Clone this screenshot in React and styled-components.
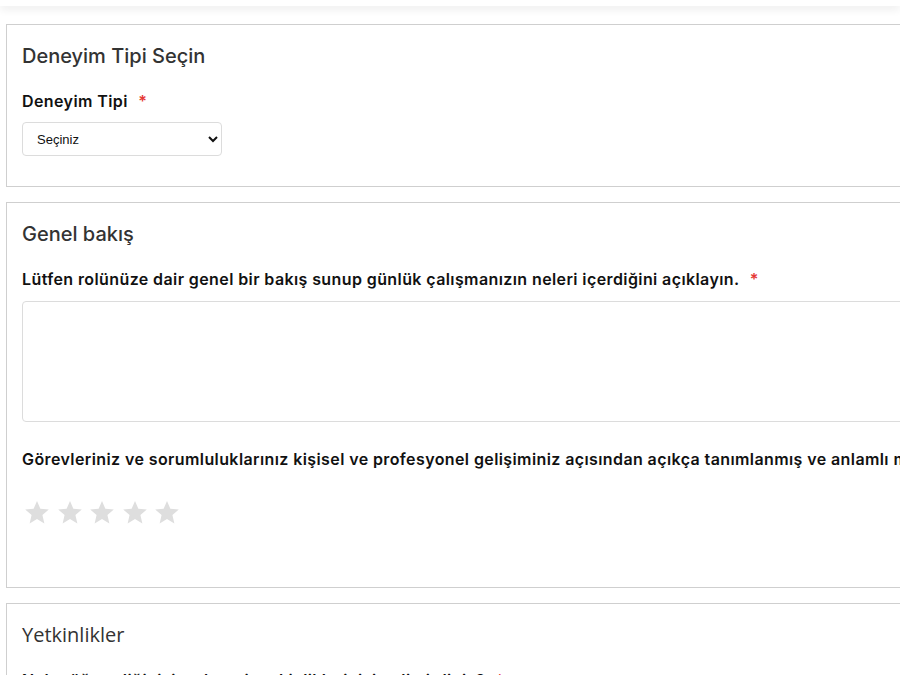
import styled, { createGlobalStyle } from "styled-components";

const GlobalStyle = createGlobalStyle`
    html, body {
        margin: 0;
        padding: 0;
        background: #fff;
        overflow-x: hidden;
    }
    body {
        font-family: Inter, "Noto Sans", sans-serif;
        color: #111;
    }
    * {
        box-sizing: border-box;
    }
`

const TopBar = styled.header`
    height: 6px;
    background: #fff;
    box-shadow: 0 3px 8px rgba(0, 0, 0, 0.09);
    position: relative;
    z-index: 1;
`

const Page = styled.main`
    width: 1300px;
    padding: 18px 0 0 6px;
`

const Card = styled.section`
    border: 1px solid #cfcfcf;
    background: #fff;
    padding: 17px 15px 30px;
    margin-bottom: 15px;
`

const Title = styled.h3`
    margin: 0 0 19px;
    font-family: ${p => p.$alt ? '"Open Sans", sans-serif' : 'Inter, "Noto Sans", sans-serif'};
    font-size: 20px;
    line-height: 28px;
    font-weight: 500;
    color: #333;
`

const Label = styled.label`
    display: block;
    margin: 0 0 ${p => p.$gap || 9}px;
    font-size: 16px;
    line-height: 24px;
    font-weight: 600;
    letter-spacing: 0.4px;
    color: #111;
    white-space: nowrap;

    span {
        color: #e53935;
        margin-left: 6px;
    }
`

const Select = styled.select`
    width: 200px;
    height: 34px;
    padding: 0 6px 0 10px;
    border: 1px solid #dcdcdc;
    border-radius: 4px;
    background: #fff;
    font-family: "Liberation Sans", Arial, sans-serif;
    font-size: 13px;
    color: #111;
`

const TextArea = styled.textarea`
    display: block;
    width: 100%;
    height: 121px;
    margin: 0 0 25px;
    border: 1px solid #dcdcdc;
    border-radius: 4px;
    resize: none;
    font-family: inherit;
`

const Stars = styled.div`
    display: flex;
    gap: 6.5px;
    padding-left: 2px;
    margin: 29px 0 32px;
`

function Star() {
    return (
        <svg width="26" height="25" viewBox="0 0 24 23">
            <path
                d="M12 0.8l3.1 7.2 7.8 0.7-5.9 5.2 1.8 7.7L12 17.6l-6.8 4 1.8-7.7-5.9-5.2 7.8-0.7z"
                fill="#dedede"
            />
        </svg>
    )
}

export default function App() {
    return (
        <>
            <GlobalStyle />
            <TopBar />
            <Page>
                <Card>
                    <Title>Deneyim Tipi Seçin</Title>
                    <Label>Deneyim Tipi <span>*</span></Label>
                    <Select defaultValue="">
                        <option value="">Seçiniz</option>
                        <option value="1">Staj</option>
                        <option value="2">Tam zamanlı</option>
                    </Select>
                </Card>

                <Card>
                    <Title>Genel bakış</Title>
                    <Label $gap={10}>
                        Lütfen rolünüze dair genel bir bakış sunup günlük çalışmanızın neleri içerdiğini açıklayın. <span>*</span>
                    </Label>
                    <TextArea />
                    <Label>
                        Görevleriniz ve sorumluluklarınız kişisel ve profesyonel gelişiminiz açısından açıkça tanımlanmış ve anlamlı mıydı? <span>*</span>
                    </Label>
                    <Stars>
                        {[0, 1, 2, 3, 4].map(i => <Star key={i} />)}
                    </Stars>
                </Card>

                <Card>
                    <Title $alt>Yetkinlikler</Title>
                    <Label>
                        Neler öğrendiğinizi ve hangi yetkinliklerinizi geliştirdiniz? <span>*</span>
                    </Label>
                </Card>
            </Page>
        </>
    )
}
